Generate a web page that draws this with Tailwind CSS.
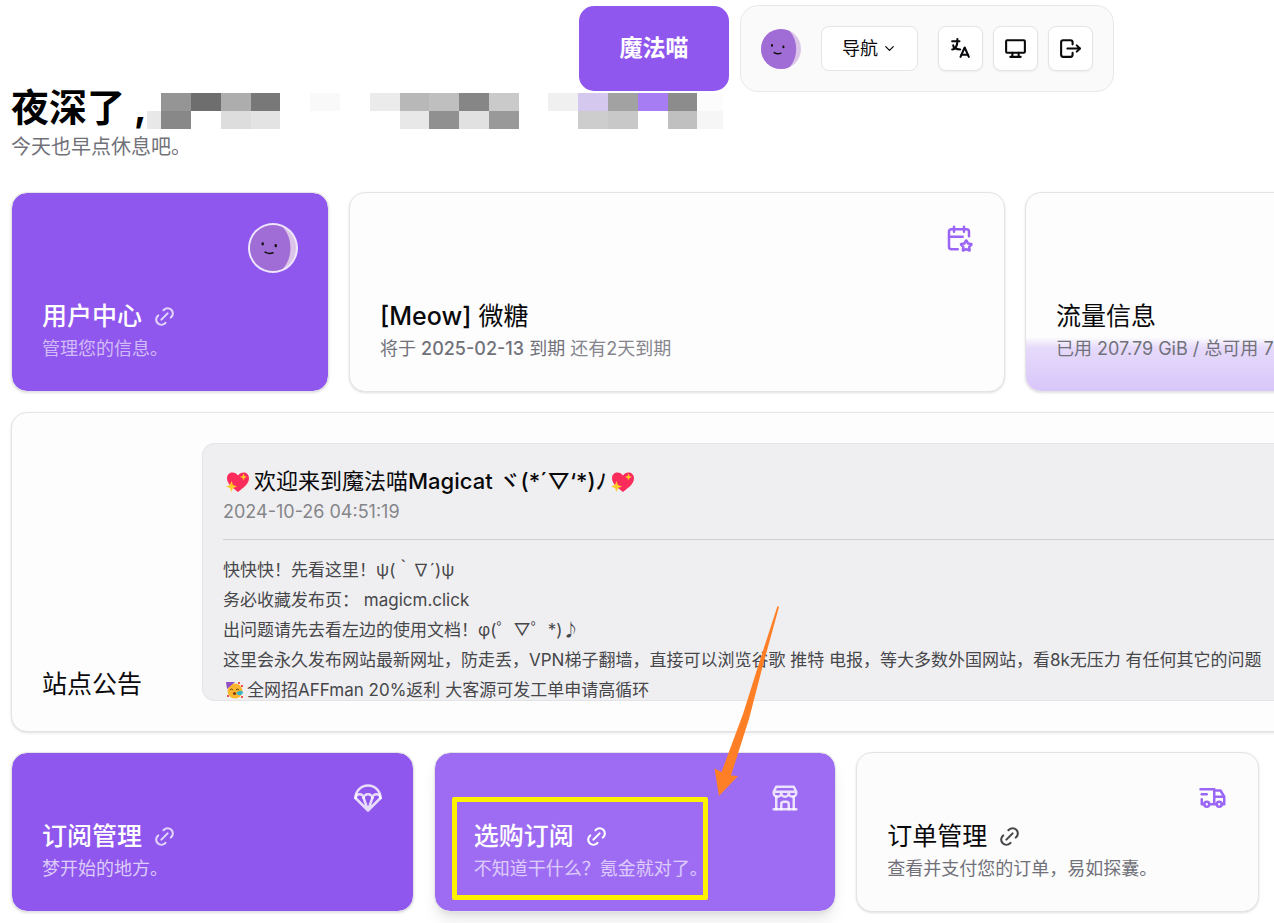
<!DOCTYPE html>
<html lang="zh-CN">
<head>
<meta charset="utf-8">
<meta name="viewport" content="width=device-width, initial-scale=1">
<title>魔法喵</title>
<script src="https://cdn.jsdelivr.net/npm/@tailwindcss/browser@4"></script>
</head>
<body class="min-h-screen overflow-hidden bg-white pb-3 pl-[11px] pt-[5px] font-['Inter','Noto_Sans_CJK_SC',sans-serif] text-[18px] text-[#09090b]">
<svg class="absolute size-0" aria-hidden="true">
  <symbol id="link" viewBox="0 0 24 24"><path d="M9 15l6 -6"/><path d="M11 6l.463 -.536a5 5 0 0 1 7.071 7.072l-.534 .464"/><path d="M13 18l-.397 .534a5.068 5.068 0 0 1 -7.127 0a4.972 4.972 0 0 1 0 -7.071l.524 -.463"/></symbol>
  <clipPath id="round"><circle cx="25" cy="25" r="25"/></clipPath>
  <symbol id="face" viewBox="0 0 50 50">
    <g clip-path="url(#round)"><rect width="50" height="50" fill="#dcc3e8"/><ellipse cx="18" cy="25" rx="26" ry="31" fill="#a06cd5"/></g>
    <g stroke="#111" fill="none" stroke-linecap="round"><path stroke-width="2.600" d="M13.800 20v.8M28 22v.8"/><path stroke-width="1.800" d="M16.500 29.500q4 2.500 8.500 .7"/></g>
  </symbol>
  <symbol id="heart" viewBox="0 0 24 24">
    <path fill="#fb2c5b" d="M12 22C8 18.500 1 14.500 1 8.200C1 1.600 9 .5 12 5.500C15 .5 23 1.600 23 8.200C23 14.500 16 18.500 12 22Z"/>
    <path fill="#ffca28" d="M5.500 11l1.500 4 4 1.500-4 1.500-1.500 4-1.500-4-4-1.500 4-1.500zM17.500 3.500l1 2.500 2.500 1-2.500 1-1 2.500-1-2.500-2.500-1 2.500-1z"/>
  </symbol>
</svg>

<header class="flex items-center gap-[11px] pl-[568px]">
  <a href="#" class="flex h-[85px] w-[150px] shrink-0 items-center justify-center rounded-[15px] bg-[#9057ee] text-[23px] font-bold text-white">魔法喵</a>
  <nav class="flex h-[87px] items-center gap-5 rounded-[18px] border border-[#e8e8ea] bg-[#fafafa] px-5">
    <svg class="size-10" aria-hidden="true"><use href="#face"/></svg>
    <button class="flex h-[45px] w-[97px] items-center justify-center gap-1 rounded-[8px] border border-[#e4e4e7] bg-white">导航
      <svg class="size-[15px]" viewBox="0 0 24 24" fill="none" stroke="currentColor" stroke-width="2" stroke-linecap="round" stroke-linejoin="round"><path d="m6 9 6 6 6-6"/></svg></button>
    <div class="flex gap-[10px]">
      <button aria-label="语言" class="flex size-[45px] items-center justify-center rounded-[8px] border border-[#e4e4e7] bg-white shadow-xs"><svg class="size-[25px]" viewBox="0 0 24 24" fill="none" stroke="currentColor" stroke-width="2" stroke-linecap="round" stroke-linejoin="round"><path d="M4 5h7"/><path d="M9 3v2c0 4.418 -2.239 8 -5 8"/><path d="M5 9c0 2.144 2.952 3.908 6.700 4"/><path d="M12 20l4 -9l4 9"/><path d="M19.100 18h-6.200"/></svg></button>
      <button aria-label="主题" class="flex size-[45px] items-center justify-center rounded-[8px] border border-[#e4e4e7] bg-white shadow-xs"><svg class="size-[25px]" viewBox="0 0 24 24" fill="none" stroke="currentColor" stroke-width="2" stroke-linecap="round" stroke-linejoin="round"><path d="M3 5a1 1 0 0 1 1 -1h16a1 1 0 0 1 1 1v10a1 1 0 0 1 -1 1h-16a1 1 0 0 1 -1 -1z"/><path d="M7 20h10M9 16v4M15 16v4"/></svg></button>
      <button aria-label="退出" class="flex size-[45px] items-center justify-center rounded-[8px] border border-[#e4e4e7] bg-white shadow-xs"><svg class="size-[25px]" viewBox="0 0 24 24" fill="none" stroke="currentColor" stroke-width="2" stroke-linecap="round" stroke-linejoin="round"><path d="M14 8v-2a2 2 0 0 0 -2 -2h-7a2 2 0 0 0 -2 2v12a2 2 0 0 0 2 2h7a2 2 0 0 0 2 -2v-2"/><path d="M9 12h12l-3 -3"/><path d="M18 15l3 -3"/></svg></button>
    </div>
  </nav>
</header>

<main>
  <div class="flex h-[38px] items-start">
    <h1 class="w-[136px] shrink-0 whitespace-pre text-[38px] font-bold leading-[30px] text-black">夜深了 ,</h1>
    <svg class="mt-px h-9 w-[576px] shrink-0" viewBox="147 0 576 36" shape-rendering="crispEdges" aria-hidden="true">
      <path fill="#e8e8e8" d="M147 18h14v18h-14z"/><path fill="#959595" d="M161 0h30v18h-30z"/><path fill="#888" d="M161 18h30v18h-30z"/><path fill="#6e6e6e" d="M191 0h30v18h-30z"/><path fill="#adadad" d="M221 0h30v18h-30z"/><path fill="#ddd" d="M221 18h30v18h-30z"/><path fill="#787878" d="M251 0h29v18h-29z"/><path fill="#e3e3e3" d="M251 18h29v18h-29z"/><path fill="#f9f9f9" d="M310 0h30v18h-30z"/>
      <path fill="#ebebeb" d="M370 0h30v18h-30z"/><path fill="#b8b8b8" d="M400 0h29v18h-29z"/><path fill="#e8e8e8" d="M400 18h29v18h-29z"/><path fill="#bfbfbf" d="M429 0h30v18h-30z"/><path fill="#909090" d="M429 18h30v18h-30z"/><path fill="#868686" d="M459 0h30v18h-30z"/><path fill="#e1e1e1" d="M459 18h30v18h-30z"/><path fill="#cacaca" d="M489 0h30v18h-30z"/><path fill="#999" d="M489 18h30v18h-30z"/>
      <path fill="#f0f0f0" d="M548 0h30v18h-30z"/><path fill="#d5c8ef" d="M578 0h30v18h-30z"/><path fill="#cdcdcd" d="M578 18h30v18h-30z"/><path fill="#a2a2a2" d="M608 0h30v18h-30z"/><path fill="#c8c8c8" d="M608 18h30v18h-30z"/><path fill="#a67df2" d="M638 0h30v18h-30z"/><path fill="#8c8c8c" d="M668 0h29v18h-29z"/><path fill="#c0c0c0" d="M668 18h29v18h-29z"/><path fill="#fcfcfc" d="M697 0h26v18h-26z"/><path fill="#f6f6f6" d="M697 18h26v18h-26z"/>
    </svg>
  </div>
  <p class="mt-[3px] text-[20px] leading-7 text-[#71717a]">今天也早点休息吧。</p>

  <section class="-mr-[69px] mt-[31px] grid grid-cols-4 gap-5">
    <a href="#" class="flex h-[200px] flex-col justify-between rounded-[16px] border border-[#e4e4e7] bg-[#9057ee] bg-clip-padding p-[30px] text-white shadow-sm">
      <span class="flex size-[50px] items-center justify-center self-end rounded-full bg-white/85"><svg class="size-[46px]" aria-hidden="true"><use href="#face"/></svg></span>
      <span><span class="mb-[5px] flex items-center gap-[10px] text-[25px] font-medium leading-[30px]">用户中心 <svg class="size-[25px] fill-none stroke-white/75 stroke-2" stroke-linecap="round"><use href="#link"/></svg></span>
      <span class="block leading-[25px] text-white/60">管理您的信息。</span></span>
    </a>
    <article class="col-span-2 flex h-[200px] flex-col justify-between rounded-[16px] border border-[#e4e4e7] bg-[#fdfdfd] p-[30px] shadow-sm">
      <svg class="size-[30px] self-end text-[#9b66f5]" viewBox="0 0 24 24" fill="none" stroke="currentColor" stroke-width="2" stroke-linecap="round" stroke-linejoin="round"><path d="M11 21h-5a2 2 0 0 1 -2 -2v-12a2 2 0 0 1 2 -2h12a2 2 0 0 1 2 2v3.500"/><path d="M16 3v4M8 3v4M4 11h11"/><path d="M17.800 20.817l-2.172 1.138a.392 .392 0 0 1 -.568 -.41l.415 -2.411l-1.757 -1.707a.389 .389 0 0 1 .217 -.665l2.428 -.352l1.086 -2.193a.392 .392 0 0 1 .702 0l1.086 2.193l2.428 .352a.39 .39 0 0 1 .217 .665l-1.757 1.707l.414 2.410a.39 .39 0 0 1 -.567 .411z"/></svg>
      <div><h2 class="mb-[5px] text-[25px] leading-[30px]"><span class="font-medium">[Meow]</span> 微糖</h2>
      <p class="leading-[25px] text-[#71717a]">将于 <span class="font-medium">2025-02-13</span> 到期 <span class="text-[#85858e]">还有2天到期</span></p></div>
    </article>
    <article class="relative flex h-[200px] flex-col justify-end overflow-hidden rounded-[16px] border border-[#e4e4e7] bg-[#fdfdfd] p-[30px] shadow-sm">
      <div class="absolute inset-x-0 bottom-0 h-[54px] bg-linear-to-b from-[#fdfdfd] via-[#e6dafb] via-20% to-[#d8c6f9]"></div>
      <div class="relative whitespace-nowrap"><h2 class="mb-[5px] text-[25px] leading-[30px]">流量信息</h2>
      <p class="leading-[25px] text-[#71717a]">已用 207.79 GiB / 总可用 768 GiB</p></div>
    </article>
  </section>

  <section class="-mr-[69px] mt-5 flex h-[320px] items-end gap-[60px] rounded-[16px] border border-[#e4e4e7] bg-[#fdfdfd] p-[30px] shadow-sm">
    <h2 class="shrink-0 text-[25px] leading-[34px]">站点公告</h2>
    <article class="h-full min-w-0 flex-1 overflow-hidden whitespace-nowrap rounded-[12px] border border-[#e4e4e7] bg-[#efeff1] px-5 pt-[22px]">
      <h3 class="flex items-center text-[22px] leading-[31px]"><svg class="ml-[3px] mr-1 size-6" aria-hidden="true"><use href="#heart"/></svg>欢迎来到魔法喵<span class="font-medium">Magicat&nbsp;ヾ(*´▽‘*)ﾉ</span><svg class="ml-1 size-6" aria-hidden="true"><use href="#heart"/></svg></h3>
      <time class="block leading-[30px] text-[#858589]">2024-10-26 04:51:19</time>
      <hr class="mb-[15px] mt-3 border-[#d0d0d3]">
      <div class="text-[17px] leading-[30px] text-[#47474b]">
        <p>快快快！先看这里！ψ(｀∇´)ψ</p>
        <p>务必收藏发布页： magicm.click</p>
        <p>出问题请先去看左边的使用文档！φ(゜▽゜*)♪</p>
        <p>这里会永久发布网站最新网址，防走丢，VPN梯子翻墙，直接可以浏览谷歌 推特 电报，等大多数外国网站，看8k无压力 有任何其它的问题</p>
        <p class="flex items-center"><svg class="ml-[3px] mr-[3px] size-[18px]" viewBox="0 0 18 18" aria-hidden="true"><circle cx="9" cy="10" r="7.500" fill="#ffb62e"/><path d="M0 1h9L1 8z" fill="#8e4ec6"/><path d="M4 9q1.500-2 3 0M10 9q1.500-2 3 0" fill="none" stroke="#5d3c1a"/><circle cx="8.500" cy="12.500" r="1.500" fill="#7a3b12"/><path d="M10 12q5-4 7-1q-1 4-5 3z" fill="#35b6c9"/><path d="M12 1h2v2h-2zM15 4h2v2h-2zM1 14h2v2H1zM15 15h2v2h-2z" fill="#ef5350"/></svg>全网招AFFman 20%返利 大客源可发工单申请高循环</p>
      </div>
    </article>
  </section>

  <section class="mr-[15px] mt-5 grid grid-cols-3 gap-5">
    <a href="#" class="flex h-[160px] flex-col justify-between rounded-[16px] border border-[#e4e4e7] bg-[#9057ee] bg-clip-padding p-[30px] text-white shadow-sm">
      <svg class="size-[30px] self-end text-white/80" viewBox="0 0 24 24" fill="none" stroke="currentColor" stroke-width="2" stroke-linecap="round" stroke-linejoin="round"><path d="M22 12a10 10 0 1 0 -20 0"/><path d="M22 12c0 -1.660 -1.460 -3 -3.250 -3c-1.800 0 -3.250 1.340 -3.250 3c0 -1.660 -1.570 -3 -3.500 -3s-3.500 1.340 -3.500 3c0 -1.660 -1.460 -3 -3.250 -3c-1.800 0 -3.250 1.340 -3.250 3"/><path d="M2 12l10 10l-3.500 -10M15.500 12l-3.500 10l10 -10"/></svg>
      <span><span class="mb-[5px] flex items-center gap-[10px] text-[25px] font-medium leading-[30px]">订阅管理 <svg class="size-[25px] fill-none stroke-white/75 stroke-2" stroke-linecap="round"><use href="#link"/></svg></span>
      <span class="block leading-[25px] text-white/70">梦开始的地方。</span></span>
    </a>
    <a href="#" class="relative flex h-[160px] flex-col justify-between rounded-[16px] border border-[#e4e4e7] bg-[#9e6cf3] bg-clip-padding py-[30px] pl-[39px] pr-[35px] text-white shadow-lg">
      <svg class="size-[30px] self-end text-white/80" viewBox="0 0 24 24" fill="none" stroke="currentColor" stroke-width="2" stroke-linecap="round" stroke-linejoin="round"><path d="M3 21h18"/><path d="M3 7v1a3 3 0 0 0 6 0v-1m0 1a3 3 0 0 0 6 0v-1m0 1a3 3 0 0 0 6 0v-1h-18l2 -4h14l2 4"/><path d="M5 21v-10.150M19 21v-10.150"/><path d="M9 21v-4a2 2 0 0 1 2 -2h2a2 2 0 0 1 2 2v4"/></svg>
      <span><span class="mb-[5px] flex items-center gap-[10px] text-[25px] font-medium leading-[30px]">选购订阅 <svg class="size-[25px] fill-none stroke-white stroke-2" stroke-linecap="round"><use href="#link"/></svg></span>
      <span class="block leading-[25px] text-white/65">不知道干什么？氪金就对了。</span></span>
      <span class="pointer-events-none absolute left-[17px] top-11 h-[103px] w-[256px] rounded-[2px] border-5 border-[#fff200]"></span>
      <svg class="pointer-events-none absolute -top-[147px] left-[278px] h-[192px] w-[66px]" viewBox="713 606 66 192" fill="#ff7f27" aria-hidden="true"><path d="M777.500 606L779 607L763 665L749 719L731 775.500L738 776L719 796L714.500 768.500L721.500 772L743 714L760 660Z"/></svg>
    </a>
    <a href="#" class="flex h-[160px] flex-col justify-between rounded-[16px] border border-[#e4e4e7] bg-[#fcfcfc] p-[30px] shadow-sm">
      <svg class="size-[30px] self-end text-[#9b66f5]" viewBox="0 0 24 24" fill="none" stroke="currentColor" stroke-width="2" stroke-linecap="round" stroke-linejoin="round"><circle cx="7" cy="17" r="2"/><circle cx="17" cy="17" r="2"/><path d="M5 17h-2v-4m-1 -8h11v12m-4 0h6m4 0h2v-6h-8m0 -5h5l3 5"/><path d="M3 9h4"/></svg>
      <span><span class="mb-[5px] flex items-center gap-[10px] text-[25px] leading-[30px]">订单管理 <svg class="size-[25px] fill-none stroke-[#47474b] stroke-2" stroke-linecap="round"><use href="#link"/></svg></span>
      <span class="block leading-[25px] text-[#71717a]">查看并支付您的订单，易如探囊。</span></span>
    </a>
  </section>
</main>
</body>
</html>
